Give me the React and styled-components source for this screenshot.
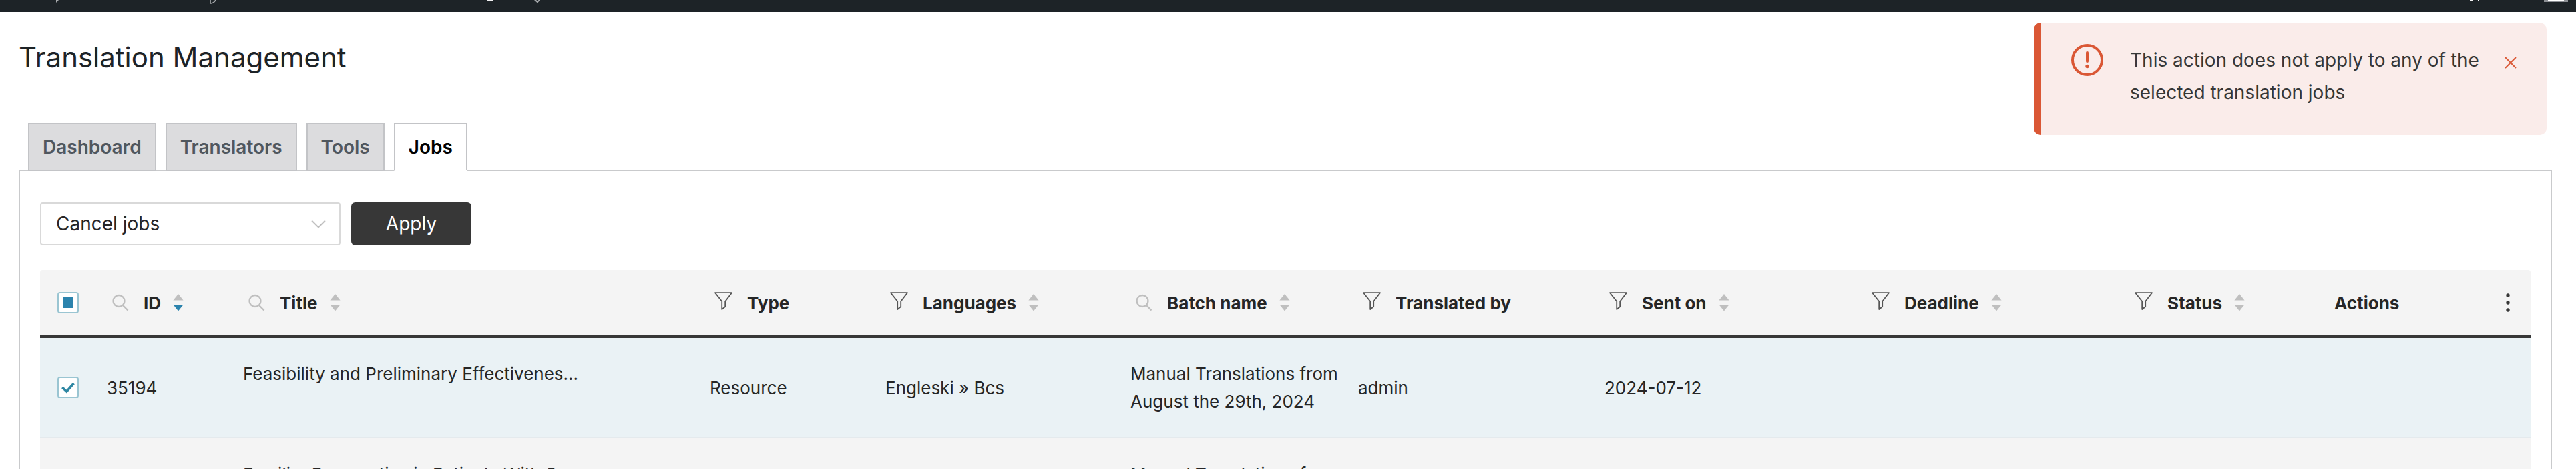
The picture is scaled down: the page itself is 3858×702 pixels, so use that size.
import React from "react";
import styled, { createGlobalStyle, css } from "styled-components";

const Global = createGlobalStyle`
  * { box-sizing: border-box; }
  html, body { margin: 0; background: #fff; }
  body, button, select, input { font-family: Inter, "Liberation Sans", sans-serif; }
  body { color: #262626; font-size: 26px; line-height: 41px; }
`;

const Page = styled.div`
  height: 100vh;
  overflow: hidden;
`;

const AdminBar = styled.header`
  display: flex;
  justify-content: space-between;
  height: 18px;
  padding: 0 12px 0 84px;
  background: #1d2327;
`;

const BarMarks = styled.svg`
  display: block;
  width: ${(p) => p.$w}px;
  height: 8px;
`;

const Main = styled.main`
  padding: 24px 36px 0 28px;
`;

const PageTitle = styled.h1`
  margin: 0;
  padding-top: 16px;
  font-size: 42px;
  font-weight: 400;
  line-height: 56px;
  color: #1d2327;
`;

const Tabs = styled.nav`
  display: flex;
  gap: 14px;
  margin-top: 70px;
  padding-left: 14px;
`;

const Tab = styled.a`
  position: relative;
  z-index: 1;
  height: 72px;
  margin-bottom: -2px;
  padding: 10px 20px;
  border: 2px solid #c3c4c7;
  background: #dcdcde;
  color: #50575e;
  font-size: 28px;
  font-weight: 600;
  line-height: 48px;
  text-decoration: none;
  ${(p) =>
    p.$active &&
    css`
      background: #fff;
      border-bottom-color: #fff;
      color: #000;
    `}
`;

const Panel = styled.section`
  padding: 47px 30px;
  border: 2px solid #c9cacc;
`;

const Toolbar = styled.form`
  display: flex;
  gap: 16px;
  margin-bottom: 37px;
`;

const SelectBox = styled.div`
  display: grid;
  width: 450px;
  align-items: center;
  > * { grid-area: 1 / 1; }
  > svg { justify-self: end; margin-right: 22px; pointer-events: none; }
`;

const Select = styled.select`
  appearance: none;
  width: 100%;
  height: 64px;
  padding: 0 22px;
  border: 2px solid #d9d9d9;
  border-radius: 4px;
  background: #fff;
  color: #262626;
  font-size: 28px;
`;

const ApplyButton = styled.button`
  width: 180px;
  height: 64px;
  border: 0;
  border-radius: 6px;
  background: #373737;
  color: #fff;
  font-size: 28px;
`;

const Table = styled.table`
  width: 100%;
  table-layout: fixed;
  border-collapse: separate;
  border-spacing: 0;
`;

const Col = styled.col`
  width: ${(p) => (p.$w ? `${p.$w}px` : "auto")};
`;

const Th = styled.th`
  height: 102px;
  padding: 0 16px;
  border-bottom: 4px solid #373737;
  background: #f4f4f4;
  font-weight: 700;
  text-align: left;
  white-space: nowrap;
  &:first-child { border-top-left-radius: 4px; }
  &:last-child { border-top-right-radius: 4px; }
`;

const HeadCell = styled.div`
  display: flex;
  align-items: center;
  justify-content: ${(p) => (p.$center ? "center" : "flex-start")};
`;

const IconButton = styled.button`
  display: flex;
  align-items: center;
  height: 32px;
  margin: 0;
  padding: ${(p) => (p.$end ? "0" : "0 22px 0 7px")};
  border: 0;
  background: none;
  ${(p) => p.$raised && css`align-items: flex-start;`}
`;

const SortButton = styled(IconButton)`
  padding: 0 0 0 18px;
`;

const Td = styled.td`
  height: 150px;
  padding: 0 8px 0 16px;
  border-bottom: 2px solid #e4eaed;
  background: ${(p) => (p.$selected ? "#eaf2f5" : "#f4f4f4")};
  vertical-align: middle;
`;

const RowActions = styled.div`
  height: 41px;
`;

const CheckBox = styled.label`
  display: grid;
  width: 32px;
  height: 32px;
  margin: 0 auto;
  place-items: center;
  > * { grid-area: 1 / 1; }
  > svg { pointer-events: none; }
`;

const SelectTd = styled(Td)`
  padding: 0 16px;
`;

const CheckInput = styled.input`
  appearance: none;
  width: 32px;
  height: 32px;
  margin: 0;
  border: 2px solid #9ac5d2;
  border-radius: 4px;
  background: #fff;
`;

const Toast = styled.div`
  position: absolute;
  top: 34px;
  right: 44px;
  display: flex;
  width: 768px;
  height: 168px;
  padding: 32px 45px 0 46px;
  border-left: 10px solid #da5735;
  border-radius: 10px;
  background: #faecea;
`;

const ToastText = styled.p`
  flex: 1;
  margin: 0 16px 0 40px;
  color: #373737;
  font-size: 28px;
  line-height: 48px;
`;

const CloseButton = styled.button`
  width: 18px;
  height: 18px;
  margin: 19px 0 0;
  padding: 0;
  border: 0;
  background: none;
  svg { display: block; }
`;

const SearchIcon = () => (
  <svg width="26" height="26" viewBox="0 0 26 26" fill="none" stroke="#bfbfbf" strokeWidth="2.4">
    <circle cx="11" cy="10.5" r="8.5" />
    <path d="M17 17 24.5 24.5" />
  </svg>
);

const FilterIcon = () => (
  <svg width="27" height="28" viewBox="0 0 27 28" fill="none" stroke="#555" strokeWidth="1.8">
    <path d="M1 1.2H26L16.2 14V22L11.2 26V14Z" strokeLinejoin="round" />
  </svg>
);

const SortIcon = ({ descending }) => (
  <svg width="16" height="26" viewBox="0 0 16 26" fill="#bfbfbf">
    <path d="M8 0 15.6 9.4H.4Z" />
    <path d="M8 25.4 15.6 16H.4Z" fill={descending ? "#2b83ad" : "#bfbfbf"} />
  </svg>
);

const columns = [
  { title: "ID", icon: "search", sort: true, descending: true, width: 204 },
  { title: "Title", icon: "search", sort: true },
  { title: "Type", icon: "filter", width: 263 },
  { title: "Languages", icon: "filter", sort: true, width: 367 },
  { title: "Batch name", icon: "search", sort: true, width: 341 },
  { title: "Translated by", icon: "filter", width: 369 },
  { title: "Sent on", icon: "filter", sort: true, width: 393 },
  { title: "Deadline", icon: "filter", sort: true, width: 394 },
  { title: "Status", icon: "filter", sort: true, width: 306 },
  { title: "Actions", width: 242 },
];

const rows = [
  {
    selected: true,
    id: "35194",
    title: "Feasibility and Preliminary Effectivenes...",
    type: "Resource",
    languages: "Engleski » Bcs",
    batch: "Manual Translations from August the 29th, 2024",
    translator: "admin",
    sent: "2024-07-12",
  },
  {
    selected: false,
    id: "35193",
    title: "Familiar Perspective in Patients With S...",
    type: "Resource",
    languages: "Engleski » Bcs",
    batch: "Manual Translations from August the 29th, 2024",
    translator: "admin",
    sent: "2024-07-12",
  },
];

const tabs = ["Dashboard", "Translators", "Tools", "Jobs"];

export default function App() {
  return (
    <Page>
      <Global />
      <AdminBar>
        <BarMarks $w={740} viewBox="0 0 740 8" aria-hidden="true">
          <path d="M0 0H4L0 4Z" fill="#a7aaad" />
          <path d="M231 0V5Q236 5 239 0" fill="none" stroke="#a7aaad" strokeWidth="1.6" />
          <path d="M646 0H655V1H646Z" fill="#f0f0f1" />
          <path d="M716 0H719L721 1.5 722.500 0H725L721 4.500Z" fill="#a7aaad" />
        </BarMarks>
        <BarMarks $w={148} viewBox="0 0 148 8" aria-hidden="true">
          <path d="M1 0H5V1H1ZM13 0H15V1H13Z" fill="#f0f0f1" />
          <path d="M112 0H148V3H112Z" fill="#8c8f94" />
          <path d="M118 0H142V1H118Z" fill="#fff" />
        </BarMarks>
      </AdminBar>
      <Main>
        <PageTitle>Translation Management</PageTitle>
        <Tabs>
          {tabs.map((t) => (
            <Tab key={t} href={`#${t.toLowerCase()}`} $active={t === "Jobs"}>
              {t}
            </Tab>
          ))}
        </Tabs>
        <Panel>
          <Toolbar onSubmit={(e) => e.preventDefault()}>
            <SelectBox>
              <Select aria-label="Bulk action">
                <option>Cancel jobs</option>
              </Select>
              <svg width="22" height="13" viewBox="0 0 22 13" fill="none" stroke="#bfbfbf" strokeWidth="1.8">
                <path d="M1 1.5 11 11.5 21 1.5" />
              </svg>
            </SelectBox>
            <ApplyButton type="submit">Apply</ApplyButton>
          </Toolbar>
          <Table>
            <colgroup>
              <Col $w={84} />
              {columns.map((c) => (
                <Col key={c.title} $w={c.width} />
              ))}
              <Col $w={68} />
            </colgroup>
            <thead>
              <tr>
                <Th>
                  <CheckBox>
                    <CheckInput type="checkbox" aria-label="Select all jobs" />
                    <svg width="16" height="16">
                      <rect width="16" height="16" fill="#2b83ad" />
                    </svg>
                  </CheckBox>
                </Th>
                {columns.map((c) => (
                  <Th key={c.title}>
                    <HeadCell>
                      {c.icon && (
                        <IconButton type="button" aria-label={`Filter by ${c.title}`} $raised={c.icon === "filter"}>
                          {c.icon === "search" ? <SearchIcon /> : <FilterIcon />}
                        </IconButton>
                      )}
                      {c.title}
                      {c.sort && (
                        <SortButton type="button" aria-label={`Sort by ${c.title}`}>
                          <SortIcon descending={c.descending} />
                        </SortButton>
                      )}
                    </HeadCell>
                  </Th>
                ))}
                <Th>
                  <HeadCell $center>
                    <IconButton type="button" aria-label="Table settings" $end>
                      <svg width="6" height="30" viewBox="0 0 6 30" fill="#373737">
                        <circle cx="3" cy="4" r="2.7" />
                        <circle cx="3" cy="15" r="2.7" />
                        <circle cx="3" cy="26" r="2.7" />
                      </svg>
                    </IconButton>
                  </HeadCell>
                </Th>
              </tr>
            </thead>
            <tbody>
              {rows.map((r) => (
                <tr key={r.id}>
                  <SelectTd $selected={r.selected}>
                    <CheckBox>
                      <CheckInput type="checkbox" defaultChecked={r.selected} aria-label={`Select job ${r.id}`} />
                      {r.selected && (
                        <svg width="20" height="17" viewBox="0 0 20 17" fill="none" stroke="#2f87a3" strokeWidth="3.6">
                          <path d="M1.3 8 7.8 14 18.5 2" />
                        </svg>
                      )}
                    </CheckBox>
                  </SelectTd>
                  <Td $selected={r.selected}>{r.id}</Td>
                  <Td $selected={r.selected}>
                    {r.title}
                    <RowActions />
                  </Td>
                  <Td $selected={r.selected}>{r.type}</Td>
                  <Td $selected={r.selected}>{r.languages}</Td>
                  <Td $selected={r.selected}>{r.batch}</Td>
                  <Td $selected={r.selected}>{r.translator}</Td>
                  <Td $selected={r.selected}>{r.sent}</Td>
                  <Td $selected={r.selected} />
                  <Td $selected={r.selected} />
                  <Td $selected={r.selected} />
                  <Td $selected={r.selected} />
                </tr>
              ))}
            </tbody>
          </Table>
        </Panel>
      </Main>
      <Toast role="alert">
        <svg width="48" height="48" viewBox="0 0 48 48" fill="none" stroke="#da5735" strokeWidth="4">
          <circle cx="24" cy="24" r="22" />
          <path d="M24 13V26" strokeLinecap="round" />
          <circle cx="24" cy="33.5" r="2.7" fill="#da5735" stroke="none" />
        </svg>
        <ToastText>This action does not apply to any of the selected translation jobs</ToastText>
        <CloseButton type="button" aria-label="Dismiss">
          <svg width="18" height="18" viewBox="0 0 18 18" stroke="#da5735" strokeWidth="1.8">
            <path d="M1 1 17 17M17 1 1 17" />
          </svg>
        </CloseButton>
      </Toast>
    </Page>
  );
}
